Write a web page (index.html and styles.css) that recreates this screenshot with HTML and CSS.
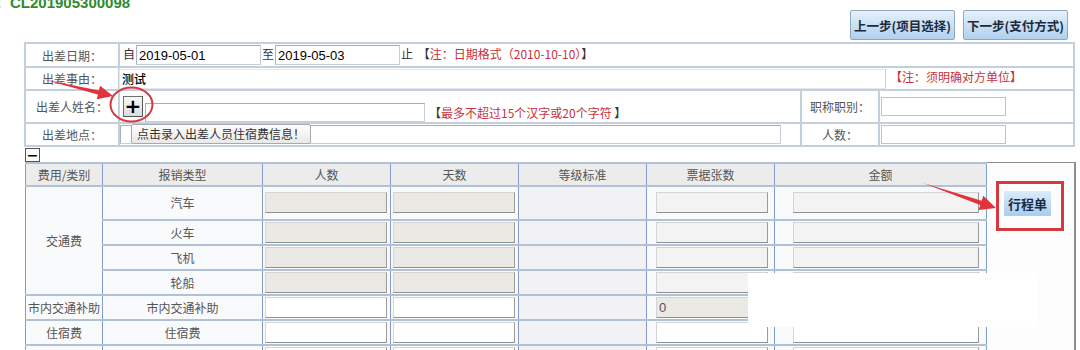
FILE: index.html
```html
<!DOCTYPE html>
<html>
<head>
	<meta charset="utf-8">
	<title>出差报销单</title>
	<link rel="stylesheet" href="styles.css">
</head>
<body>
<div class="docno">：CL201905300098</div>

<div class="toolbar">
	<button class="step">上一步(项目选择)</button>
	<button class="step">下一步(支付方式)</button>
</div>

<table class="trip">
	<colgroup>
		<col class="c-label"><col class="c-main"><col class="c-label2"><col class="c-side">
	</colgroup>
	<tr class="r-date">
		<td class="label">出差日期：</td>
		<td colspan="3" class="pad">
			自<input class="field date" value="2019-05-01">至<input class="field date" value="2019-05-03">止
			<span class="note">【<em>注：日期格式（2010-10-10）</em>】</span>
		</td>
	</tr>
	<tr class="r-reason">
		<td class="label">出差事由：</td>
		<td colspan="3">
			<input class="field reason" value="测试"><span class="note red">【注：须明确对方单位】</span>
		</td>
	</tr>
	<tr class="r-name">
		<td class="label">出差人姓名：</td>
		<td class="pad">
			<div class="line">
				<button class="add">+</button>
				<input class="field name">
				<span class="note">【<em>最多不超过15个汉字或20个字符</em> 】</span>
			</div>
		</td>
		<td class="label">职称职别：</td>
		<td class="pad-s"><input class="field side"></td>
	</tr>
	<tr class="r-place">
		<td class="label">出差地点：</td>
		<td class="tipcell">
			<input class="field place">
			<div class="tip">点击录入出差人员住宿费信息！</div>
		</td>
		<td class="label">人数：</td>
		<td class="pad-s"><input class="field side"></td>
	</tr>
</table>

<button class="fold">−</button>

<div class="detail">
	<table class="costs">
		<colgroup>
			<col class="k-type"><col class="k-kind"><col class="k-num"><col class="k-num"><col class="k-num"><col class="k-num"><col class="k-sum">
		</colgroup>
		<tr class="head">
			<th>费用/类别</th><th>报销类型</th><th>人数</th><th>天数</th><th>等级标准</th><th>票据张数</th><th>金额</th>
		</tr>
		<tr class="r-tall">
			<td rowspan="4">交通费</td><td>汽车</td>
			<td><input class="cell off n1"></td><td><input class="cell off n1"></td><td class="std"></td>
			<td><input class="cell dim bill"></td><td><input class="cell dim sum"></td>
		</tr>
		<tr class="r-std">
			<td>火车</td>
			<td><input class="cell off n1"></td><td><input class="cell off n1"></td><td class="std"></td>
			<td><input class="cell dim bill"></td><td><input class="cell dim sum"></td>
		</tr>
		<tr class="r-std">
			<td>飞机</td>
			<td><input class="cell off n1"></td><td><input class="cell off n1"></td><td class="std"></td>
			<td><input class="cell dim bill"></td><td><input class="cell dim sum"></td>
		</tr>
		<tr class="r-std">
			<td>轮船</td>
			<td><input class="cell off n1"></td><td><input class="cell off n1"></td><td class="std"></td>
			<td><input class="cell dim bill"></td><td><input class="cell dim sum"></td>
		</tr>
		<tr class="r-std">
			<td>市内交通补助</td><td>市内交通补助</td>
			<td><input class="cell n1"></td><td><input class="cell n1"></td><td class="std"></td>
			<td><input class="cell off bill" value="0"></td><td><input class="cell sum"></td>
		</tr>
		<tr class="r-std">
			<td>住宿费</td><td>住宿费</td>
			<td><input class="cell n1"></td><td><input class="cell n1"></td><td class="std"></td>
			<td><input class="cell bill"></td><td><input class="cell sum"></td>
		</tr>
		<tr class="r-std">
			<td>伙食补助</td><td>伙食补助</td>
			<td><input class="cell n1"></td><td><input class="cell n1"></td><td class="std"></td>
			<td><input class="cell bill"></td><td><input class="cell sum"></td>
		</tr>
	</table>
	<div class="side-panel">
		<div class="mark"><button class="route">行程单</button></div>
	</div>
</div>

<div class="blank"></div>

<svg class="marks" width="1080" height="350" viewBox="0 0 1080 350">
	<ellipse cx="131.5" cy="104.5" rx="21" ry="17" fill="none" stroke="#d43a3e" stroke-width="2"/>
	<polygon fill="#e2333a" points="42,79 98.9,90.4 100,85.7 113,96 96.8,99.3 97.9,94.6"/>
	<polygon fill="#e2333a" points="923,183 981.6,200.7 983.3,195.7 996,208 978.5,209.9 980.2,204.9"/>
</svg>
</body>
</html>
```

FILE: styles.css
```css
body {
	margin: 0; background: #fff;
	font: 12px "Noto Sans CJK SC", "Liberation Sans", sans-serif;
	color: #555;
	overflow: hidden;
}
input, button { font-family: "Liberation Sans", "Noto Sans CJK SC", sans-serif; }

.docno {
	height: 8px;
	margin-left: -5px;
	font: bold 15px/5px "Liberation Sans", "Noto Sans CJK SC", sans-serif;
	color: #2e8b2e;
	white-space: nowrap;
}

.toolbar {
	display: flex; justify-content: flex-end; gap: 8px;
	margin-top: 2px; padding-right: 12px;
}
.step {
	height: 30px; padding: 0 3px;
	font: bold 12.5px "Noto Sans CJK SC", sans-serif;
	color: #1d2b3c;
	border: 1px solid #8fa8c0; border-radius: 2px;
	background: linear-gradient(#e6f1fb, #b0d0ee);
}

/* upper form */
.trip {
	border-collapse: collapse; table-layout: fixed;
	width: 1049px; margin: 2px 0 0 24px;
}
.c-label { width: 94px; }
.c-main { width: 682px; }
.c-label2 { width: 78px; }
.c-side { width: 195px; }
.trip td { border: 2px solid #c3cfdc; padding: 0; white-space: nowrap; color: #333; }
.trip td.label { text-align: center; color: #555; }
.r-date { height: 24px; }
.r-reason { height: 22px; }
.r-name { height: 33px; }
.r-place { height: 23px; }
.trip td.pad { padding-left: 3px; }
.trip td.pad-s { padding-left: 1px; }

.field {
	box-sizing: border-box; height: 20px; padding: 0 2px;
	border: 1px solid #c6ced7; border-top-color: #a3acb7; border-left-color: #aab3bd;
	background: #fff; color: #000; vertical-align: middle;
	font-size: 13px;
}
.date { width: 125px; margin: 0 1px; }
.reason {
	width: 767px; height: 20px; margin-left: -1px;
	border-color: #e4e8ec; border-right-color: #c8cfd6;
	font: 500 12px "Noto Sans CJK SC", sans-serif;
}
.name { width: 280px; height: 19px; margin: 12px 0 0 2px; }
.place { width: 661px; height: 19px; margin-left: 0; }
.side { width: 125px; height: 19px; border-color: #bcc4ce; }

.note { color: #333; margin-left: 2px; }
.note em { font-style: normal; color: #c8323a; }
.note.red { color: #c8323a; margin-left: 4px; }
.line { display: flex; align-items: center; }
.line .note { margin: 12px 0 0 4px; }

.add {
	box-sizing: border-box; width: 20px; height: 21px; padding: 0;
	font: bold 20px/17px "DejaVu Sans", sans-serif; color: #000;
	border: 1px solid #6f6f6f; border-right-color: #555; border-bottom-color: #555;
	background: linear-gradient(#f7f7f7, #dcdcdc);
}

.tipcell { position: relative; }
.tip {
	position: absolute; left: 11px; top: 0;
	padding: 0 5px; height: 18px; line-height: 18px;
	font-size: 12px; color: #333;
	border: 1px solid #a9a9a9; border-radius: 2px;
	background: linear-gradient(#fdfdfd, #e9e9e9);
}

.fold {
	display: block; box-sizing: border-box;
	width: 15px; height: 14px; margin: 1px 0 0 25px; padding: 0;
	font: bold 14px/10px "DejaVu Sans", sans-serif; color: #000;
	border: 1px solid #555; background: #fbfbfb;
}

/* cost table */
.detail { display: flex; align-items: flex-start; margin-left: 25px; }
.costs { border-collapse: collapse; table-layout: fixed; width: 960px; }
.k-type { width: 77px; }
.k-kind { width: 160px; }
.k-num { width: 128px; }
.k-sum { width: 212px; }
.costs th, .costs td {
	padding: 0; text-align: center; font-weight: normal; color: #555;
	border-left: 1px solid #7f9dc8; border-right: 1px solid #7f9dc8;
	border-top: 2px solid #b1c2d7; border-bottom: 2px solid #b1c2d7;
	background: #f9fafc; white-space: nowrap;
}
.costs th { background: #ececec; height: 21px; }
.costs td.std { background: #f2f2f4; }
.r-tall { height: 34px; }
.r-std { height: 25px; }

.cell {
	display: block; box-sizing: border-box; height: 21px; padding: 0 2px;
	font-size: 13px; color: #555; text-align: left;
	border: 1px solid #d4d4d4; border-right-color: #9b9b9b; border-bottom-color: #8f8f8f;
	background: #fff;
}
.cell.off { background: #ebe9e4; }
.cell.dim { background: #f3f3f3; }
.n1 { width: 122px; margin-left: 2px; }
.bill { width: 112px; margin-left: 9px; }
.sum { width: 186px; margin-left: 18px; }

.side-panel {
	width: 87px; height: 300px;
	border-top: 1px solid #8d8d8d; border-right: 2px solid #8d8d8d;
	background: #fdfdfd;
}
.mark {
	box-sizing: border-box; width: 68px; height: 50px;
	margin: 18px 0 0 9px; padding: 7px 0 0 5px;
	border: 3px solid #d3393e;
}
.route {
	width: 47px; height: 25px; padding: 0;
	font: bold 13px "Noto Sans CJK SC", sans-serif; color: #1c2c44;
	border: 0; border-radius: 1px;
	background: linear-gradient(#dcecf9, #a9cdee);
}

/* white patch over the lower table, as in the capture */
.blank {
	position: absolute; left: 748px; top: 273px;
	width: 290px; height: 54px; background: #fff;
}
.marks { position: absolute; left: 0; top: 0; pointer-events: none; }
```
